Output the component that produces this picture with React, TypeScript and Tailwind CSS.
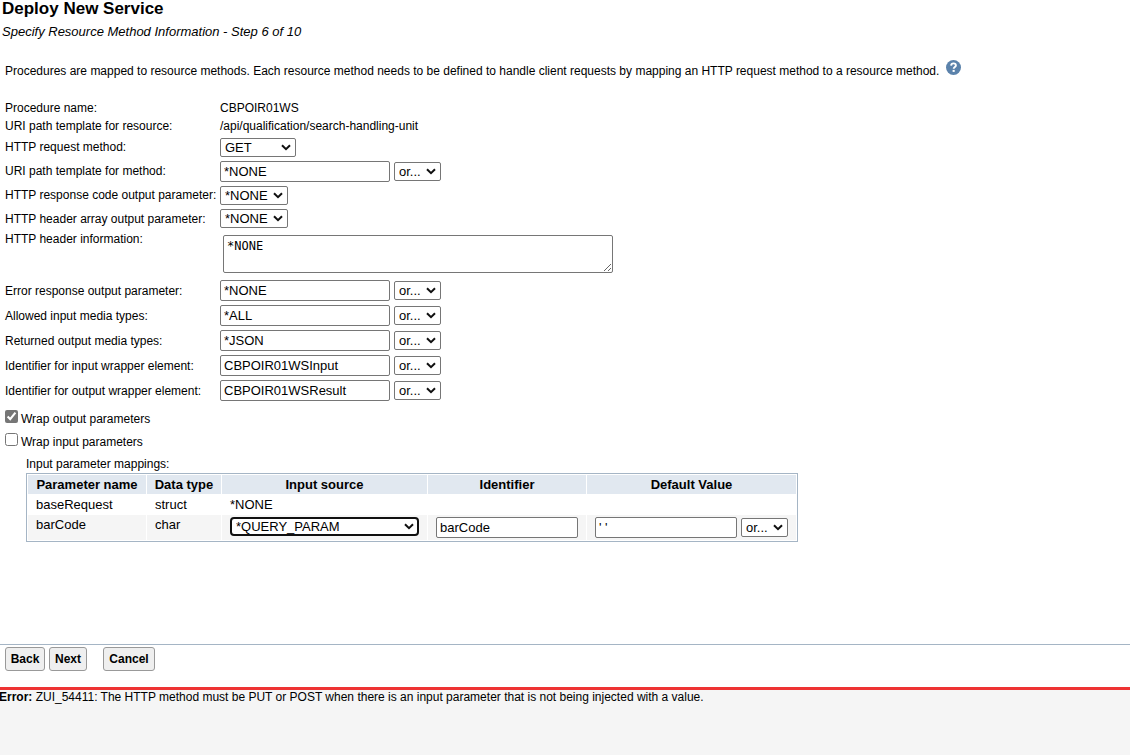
import React, { useState } from "react";

const labelClass = "leading-[18px]";
const inputClass =
  "h-[21px] rounded-[2px] border border-[#767676] bg-white px-[3px] text-[13px]";
const buttonClass =
  "h-6 rounded-[3px] border border-[#999] bg-[#efefef] font-bold";

type SelectProps = {
  id?: string;
  label?: string;
  option: string;
  className: string;
};

const Select = ({ id, label, option, className }: SelectProps) => (
  <div className="relative flex">
    <select
      id={id}
      aria-label={label}
      className={`h-[19px] appearance-none bg-white pl-1 text-[13px] leading-[15px] ${className}`}
    >
      <option>{option}</option>
    </select>
    <svg
      width="10"
      height="7"
      viewBox="0 0 10 7"
      fill="none"
      stroke="#101010"
      strokeWidth="2"
      className="pointer-events-none absolute top-1.5 right-[5px]"
      aria-hidden="true"
    >
      <path d="M1 1.2 5 5.2 9 1.2" />
    </svg>
  </div>
);

const plainSelect = "rounded-[2px] border border-[#767676]";

type OrInputProps = {
  id: string;
  label?: string;
  value: string;
  inputWidth?: string;
};

const OrInput = ({
  id,
  label,
  value,
  inputWidth = "w-[170px]",
}: OrInputProps) => {
  const [text, setText] = useState(value);

  return (
    <div className="flex items-center gap-1">
      <input
        id={id}
        type="text"
        aria-label={label}
        value={text}
        onChange={(e) => setText(e.target.value)}
        className={`${inputClass} ${inputWidth}`}
      />
      <Select
        label={`${id} choices`}
        option="or..."
        className={`${plainSelect} w-[47px]`}
      />
    </div>
  );
};

type FieldProps = {
  id?: string;
  label: string;
  height: string;
  children: React.ReactNode;
};

const Field = ({ id, label, height, children }: FieldProps) => (
  <div className={`grid grid-cols-[215px_1fr] items-center ${height}`}>
    {id ? (
      <label htmlFor={id} className={`${labelClass} whitespace-nowrap`}>
        {label}
      </label>
    ) : (
      <span className={labelClass}>{label}</span>
    )}
    <div className="flex items-center">{children}</div>
  </div>
);

const HelpIcon = () => (
  <svg width="15" height="15" viewBox="0 0 15 15" aria-hidden="true">
    <circle cx="7.5" cy="7.5" r="7.5" fill="#5b82ab" />
    <path
      d="M5.1 5.6C5.2 4.1 6.2 3.4 7.5 3.4c1.4 0 2.4.8 2.4 2 0 1.5-2.2 1.6-2.2 3.3"
      fill="none"
      stroke="#fff"
      strokeWidth="1.9"
    />
    <rect x="6.6" y="9.9" width="2.1" height="2" fill="#fff" />
  </svg>
);

const wrapperFields = [
  { id: "errorResponse", label: "Error response output parameter:", value: "*NONE" },
  { id: "inputMedia", label: "Allowed input media types:", value: "*ALL" },
  { id: "outputMedia", label: "Returned output media types:", value: "*JSON" },
  { id: "inputWrapper", label: "Identifier for input wrapper element:", value: "CBPOIR01WSInput" },
  { id: "outputWrapper", label: "Identifier for output wrapper element:", value: "CBPOIR01WSResult" },
];

const MappingTable = () => (
  <table className="w-[772px] table-fixed border-separate border-spacing-px border border-[#a5b5c5] text-left text-[13px] leading-[19px]">
    <thead>
      <tr className="bg-[#e1e8f0] text-center whitespace-nowrap">
        <th className="w-[118px]">Parameter name</th>
        <th className="w-[74px]">Data type</th>
        <th className="w-[205px]">Input source</th>
        <th className="w-[158px]">Identifier</th>
        <th>Default Value</th>
      </tr>
    </thead>
    <tbody className="align-top">
      <tr>
        <td className="px-2">baseRequest</td>
        <td className="px-2">struct</td>
        <td className="px-2">*NONE</td>
        <td></td>
        <td></td>
      </tr>
      <tr className="bg-[#f5f5f5]">
        <td className="px-2">barCode</td>
        <td className="px-2">char</td>
        <td className="px-2 pt-0.5">
          <Select
            label="Input source"
            option="*QUERY_PARAM"
            className="w-full rounded-[4px] border-2 border-[#101010]"
          />
        </td>
        <td className="px-2 py-0.5">
          <input
            type="text"
            aria-label="Identifier"
            defaultValue="barCode"
            className={`${inputClass} block w-full`}
          />
        </td>
        <td className="px-2 py-0.5">
          <OrInput
            id="defaultValue"
            label="Default value"
            value="' '"
            inputWidth="w-[142px]"
          />
        </td>
      </tr>
    </tbody>
  </table>
);

const App = () => {
  const [wrapOutput, setWrapOutput] = useState(true);
  const [wrapInput, setWrapInput] = useState(false);

  return (
    <div className="flex min-h-screen flex-col bg-white font-['Liberation_Sans',Arial,sans-serif] text-[12px] text-black">
      <main className="flex-1">
        <header className="pl-0.5">
          <h1 className="text-[17px] leading-[18px] font-bold">
            Deploy New Service
          </h1>
          <p className="pt-[5px] text-[13px] leading-[18px] italic">
            Specify Resource Method Information - Step 6 of 10
          </p>
        </header>

        <div className="px-[5px]">
          <div className="flex items-start gap-[7px] pt-[19px] pb-[19px]">
            <p className="pt-0.5 leading-[18px]">
              Procedures are mapped to resource methods. Each resource method
              needs to be defined to handle client requests by mapping an HTTP
              request method to a resource method.
            </p>
            <button type="button" aria-label="Help">
              <HelpIcon />
            </button>
          </div>

          <Field label="Procedure name:" height="h-[18px]">
            CBPOIR01WS
          </Field>
          <Field label="URI path template for resource:" height="h-[18px]">
            /api/qualification/search-handling-unit
          </Field>
          <Field id="method" label="HTTP request method:" height="h-6">
            <Select
              id="method"
              option="GET"
              className={`${plainSelect} w-[76px]`}
            />
          </Field>
          <Field id="pathTemplate" label="URI path template for method:" height="h-6">
            <OrInput id="pathTemplate" value="*NONE" />
          </Field>
          <Field id="responseCode" label="HTTP response code output parameter:" height="h-6">
            <Select
              id="responseCode"
              option="*NONE"
              className={`${plainSelect} w-[68px]`}
            />
          </Field>
          <Field id="headerArray" label="HTTP header array output parameter:" height="h-[23px]">
            <Select
              id="headerArray"
              option="*NONE"
              className={`${plainSelect} w-[68px]`}
            />
          </Field>
          <div className="grid grid-cols-[215px_1fr] items-start pb-[5px]">
            <label htmlFor="headerInfo" className={labelClass}>
              HTTP header information:
            </label>
            <textarea
              id="headerInfo"
              defaultValue="*NONE"
              className="mt-[5px] ml-[3px] h-[38px] w-[390px] rounded-[2px] border border-[#767676] px-[3px] py-0.5 font-['DejaVu_Sans_Mono',monospace] text-[12px] leading-[16px]"
            />
          </div>
          {wrapperFields.map((field) => (
            <Field key={field.id} id={field.id} label={field.label} height="h-[25px]">
              <OrInput id={field.id} value={field.value} />
            </Field>
          ))}

          <div className="flex flex-col gap-[5px] pt-[7px]">
            <label className="flex gap-[3px] leading-[18px]">
              <input
                type="checkbox"
                checked={wrapOutput}
                onChange={(e) => setWrapOutput(e.target.checked)}
                className="size-[13px] accent-[#767676]"
              />
              Wrap output parameters
            </label>
            <label className="flex gap-[3px] leading-[18px]">
              <input
                type="checkbox"
                checked={wrapInput}
                onChange={(e) => setWrapInput(e.target.checked)}
                className="size-[13px] accent-[#767676]"
              />
              Wrap input parameters
            </label>
          </div>

          <div className="pt-1 pl-[21px]">
            <p className="leading-[18px]">Input parameter mappings:</p>
            <MappingTable />
          </div>
        </div>
      </main>

      <div className="flex border-t border-[#a5b5c5] px-[5px] pt-0.5 pb-4">
        <button type="button" className={`${buttonClass} w-10`}>
          Back
        </button>
        <button type="button" className={`${buttonClass} ml-1 w-[38px]`}>
          Next
        </button>
        <button type="button" className={`${buttonClass} ml-4 w-[52px]`}>
          Cancel
        </button>
      </div>

      <footer className="-ml-px h-[68px] border-t-3 border-[#ee3333] bg-[#f5f5f5] leading-[14px]">
        <p>
          <b>Error:</b> ZUI_54411: The HTTP method must be PUT or POST when
          there is an input parameter that is not being injected with a value.
        </p>
      </footer>
    </div>
  );
};

export default App;
